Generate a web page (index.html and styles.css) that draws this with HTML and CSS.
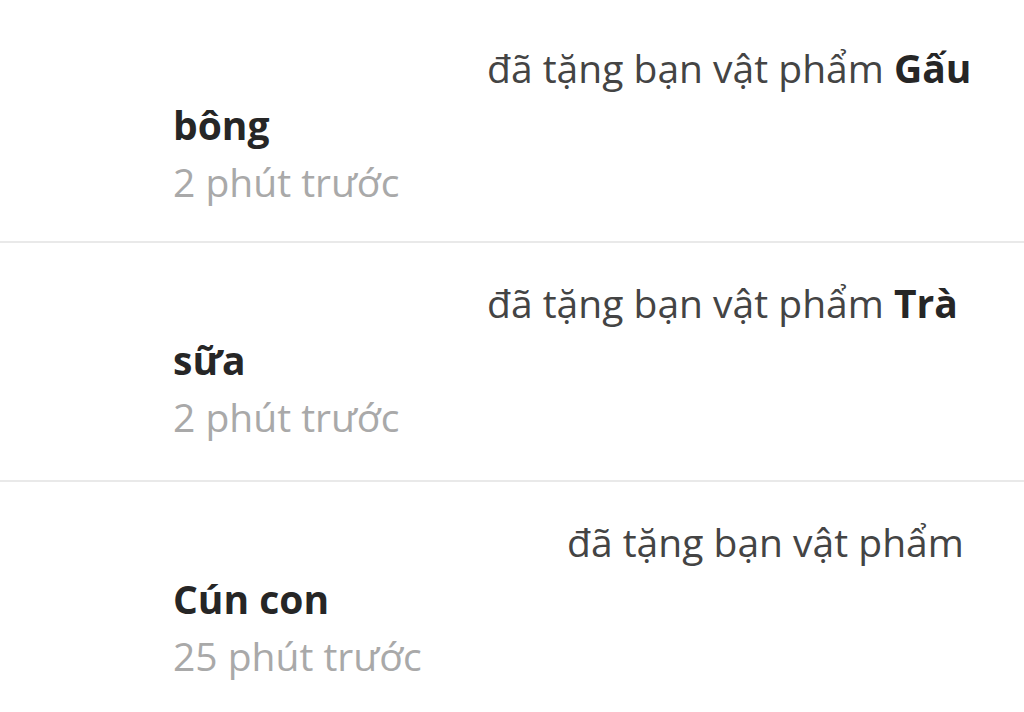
FILE: index.html
```html
<!DOCTYPE html>
<html lang="vi">
<head>
<meta charset="utf-8">
<title>Thông báo</title>
<link rel="stylesheet" href="styles.css">
</head>
<body>
<ul class="notif-list">
  <li class="notif notif-first">
    <div class="avatar"></div>
    <div class="content">
      <p class="msg"><span class="sender sender-short"></span>đã tặng bạn vật phẩm <b class="gift">Gấu bông</b></p>
      <div class="time">2 phút trước</div>
    </div>
  </li>
  <li class="notif">
    <div class="avatar"></div>
    <div class="content">
      <p class="msg"><span class="sender sender-short"></span>đã tặng bạn vật phẩm <b class="gift">Trà sữa</b></p>
      <div class="time">2 phút trước</div>
    </div>
  </li>
  <li class="notif">
    <div class="avatar"></div>
    <div class="content">
      <p class="msg"><span class="sender sender-long"></span>đã tặng bạn vật phẩm <b class="gift">Cún con</b></p>
      <div class="time">25 phút trước</div>
    </div>
  </li>
</ul>
</body>
</html>
```
FILE: styles.css
```css
html, body {
  margin: 0;
  padding: 0;
  background: #ffffff;
}
body {
  font-family: "Open Sans", "Noto Sans", sans-serif;
  height: 712px;
  overflow: hidden;
}
.notif-list {
  list-style: none;
  margin: 0;
  padding: 0;
}
.notif {
  display: flex;
  padding: 31px 24px 35px 0;
  border-bottom: 2px solid #e9e9e9;
}
.notif-first {
  padding-top: 39px;
  padding-bottom: 31px;
}
.avatar {
  flex: 0 0 173px;
}
.content {
  flex: 1;
  font-size: 39px;
  line-height: 57px;
  color: #444444;
}
.msg {
  margin: 0;
}
.sender {
  display: inline-block;
  height: 1px;
}
.sender-short { width: 314px; }
.sender-long { width: 394px; }
.gift {
  font-weight: 700;
  color: #262626;
}
.time {
  color: #a9a9a9;
}
```
